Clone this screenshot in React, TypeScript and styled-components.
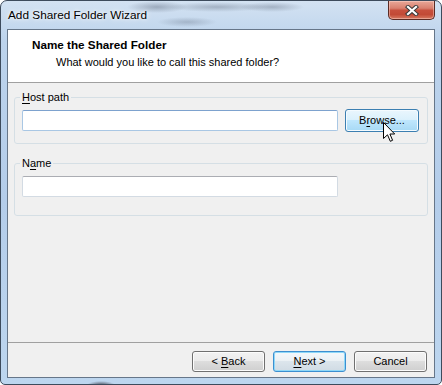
import React from 'react';
import styled, { createGlobalStyle, css } from 'styled-components';

const GlobalStyle = createGlobalStyle`
  html, body {
    margin: 0;
    padding: 0;
    background: #fff;
  }
  body {
    font-family: 'Liberation Sans', Arial, sans-serif;
    font-size: 11px;
    color: #000;
  }
`;

const CloseIcon = () => (
  <svg width="14" height="11" viewBox="0 0 14 11">
    <path d="M3 2 L11 9 M11 2 L3 9" stroke="#3b3b3b" strokeWidth="4.2" strokeLinecap="square" />
    <path d="M3 2 L11 9 M11 2 L3 9" stroke="#fff" strokeWidth="2.2" strokeLinecap="square" />
  </svg>
);

const Pointer = () => (
  <svg width="13" height="21" viewBox="0 0 13 21">
    <path
      d="M0.5 0.5 L0.5 16.5 L4.5 12.8 L7.3 19.3 L9.6 18.3 L6.9 12 L11.7 12 Z"
      fill="#fff"
      stroke="#000"
      strokeWidth="1"
      strokeLinejoin="miter"
    />
  </svg>
);

export default function App() {
  return (
    <>
      <GlobalStyle />
      <Window>
        <TitleBar>
          <Caption>Add Shared Folder Wizard</Caption>
          <CloseButton aria-label="Close">
            <CloseIcon />
          </CloseButton>
        </TitleBar>
        <Client>
          <Header>
            <HeaderTitle>Name the Shared Folder</HeaderTitle>
            <HeaderSub>What would you like to call this shared folder?</HeaderSub>
          </Header>
          <Body>
            <GroupBox $bottom={11}>
              <Legend>
                <U>H</U>ost path
              </Legend>
              <Row>
                <TextInput $active />
                <BrowseWrap>
                  <Button $variant="hover" $width={74} $height={23}>
                    <span>
                      B<U>r</U>owse...
                    </span>
                  </Button>
                  <Cursor>
                    <Pointer />
                  </Cursor>
                </BrowseWrap>
              </Row>
            </GroupBox>
            <GroupBox $bottom={17}>
              <Legend>
                N<U>a</U>me
              </Legend>
              <Row>
                <TextInput />
              </Row>
            </GroupBox>
          </Body>
          <Footer>
            <Button>
              <span>
                &lt; <U>B</U>ack
              </span>
            </Button>
            <Button $variant="default">
              <span>
                <U>N</U>ext &gt;
              </span>
            </Button>
            <Button>
              <span>Cancel</span>
            </Button>
          </Footer>
        </Client>
      </Window>
    </>
  );
}

const Window = styled.div`
  width: 442px;
  height: 385px;
  box-sizing: border-box;
  border: 1px solid #3d4b5c;
  border-radius: 7px 7px 5px 5px;
  padding: 0 6px 6px;
  display: flex;
  flex-direction: column;
  overflow: hidden;
  background:
    radial-gradient(ellipse 14px 4px at 100px 384px, rgba(40, 40, 50, 0.75), transparent),
    linear-gradient(to bottom, #d3e2f2 0, #bcd3ec 40px, #b4cdea 200px, #bdd6ef 100%);
`;

const TitleBar = styled.div`
  height: 28px;
  display: flex;
  align-items: flex-start;
  background:
    radial-gradient(ellipse 30px 6px at 150px 6px, rgba(60, 70, 90, 0.35), transparent),
    radial-gradient(ellipse 50px 5px at 210px 6px, rgba(60, 70, 90, 0.3), transparent),
    radial-gradient(ellipse 32px 5px at 265px 6px, rgba(60, 70, 90, 0.3), transparent),
    radial-gradient(ellipse 30px 5px at 180px 21px, rgba(60, 70, 90, 0.25), transparent);
`;

const Caption = styled.div`
  padding: 7px 0 0 1px;
  line-height: 15px;
  font-size: 11.8px;
  color: #000;
  text-shadow: 0 0 6px rgba(255, 255, 255, 0.95), 0 0 3px rgba(255, 255, 255, 0.9);
  white-space: nowrap;
`;

const CloseButton = styled.div`
  margin-left: auto;
  width: 47px;
  height: 19px;
  box-sizing: border-box;
  border: 1px solid #5a2b24;
  border-top: none;
  border-radius: 0 0 5px 5px;
  display: flex;
  align-items: center;
  justify-content: center;
  background: linear-gradient(
    to bottom,
    #e9a898 0%,
    #d9806f 40%,
    #c7503d 52%,
    #c24a36 75%,
    #d77a62 100%
  );
  box-shadow: inset 0 0 0 1px rgba(255, 220, 210, 0.45);
`;

const Client = styled.div`
  flex: 1;
  display: flex;
  flex-direction: column;
  border: 1px solid #667689;
  background: #f0f0f0;
`;

const Header = styled.div`
  height: 53px;
  box-sizing: border-box;
  background: #fff;
  border-bottom: 1px solid #a0a0a0;
  padding: 7px 0 0 24px;
`;

const HeaderTitle = styled.div`
  font-weight: bold;
  font-size: 11.7px;
  line-height: 15px;
`;

const HeaderSub = styled.div`
  margin: 3px 0 0 24px;
  line-height: 15px;
`;

const Body = styled.div`
  flex: 1;
  display: flex;
  flex-direction: column;
  gap: 12px;
  padding: 7px 6px 0;
`;

const GroupBox = styled.fieldset<{ $bottom: number }>`
  margin: 0;
  min-width: 0;
  border: 1px solid #d5dfe5;
  border-radius: 3px;
  padding: 4px 8px ${({ $bottom }) => $bottom}px 7px;
`;

const Legend = styled.legend`
  margin-left: -2px;
  padding: 0 2px;
  line-height: 15px;
`;

const Row = styled.div`
  display: flex;
  align-items: center;
  gap: 7px;
  height: 23px;
`;

const TextInput = styled.div<{ $active?: boolean }>`
  width: 316px;
  height: 21px;
  box-sizing: border-box;
  background: #fff;
  border: 1px solid #d3dbe3;
  border-top-color: #abadb3;
  border-radius: 2px;
  ${({ $active }) =>
    $active &&
    css`
      border-color: #a9c7e4;
      border-top-color: #7da2ce;
    `}
`;

const BrowseWrap = styled.div`
  position: relative;
`;

const Cursor = styled.div`
  position: absolute;
  left: 38px;
  top: 13px;
  line-height: 0;
`;

const U = styled.span`
  text-decoration: underline;
  text-underline-offset: 2px;
`;

const Button = styled.div<{ $variant?: 'normal' | 'default' | 'hover'; $width?: number; $height?: number }>`
  width: ${({ $width }) => $width ?? 73}px;
  height: ${({ $height }) => $height ?? 21}px;
  box-sizing: border-box;
  display: flex;
  align-items: center;
  justify-content: center;
  border: 1px solid #707070;
  border-radius: 3px;
  line-height: 15px;
  white-space: nowrap;
  background: linear-gradient(to bottom, #f2f2f2 0%, #ebebeb 50%, #dddddd 50%, #cfcfcf 100%);
  box-shadow: inset 0 0 0 1px #fcfcfc;
  ${({ $variant }) =>
    $variant === 'default' &&
    css`
      border-color: #3c8fd0;
      box-shadow: inset 0 0 0 1px #8fd8f8;
      background: linear-gradient(to bottom, #f4f8fb 0%, #eaf0f4 50%, #dce5ec 50%, #d0dbe4 100%);
    `}
  ${({ $variant }) =>
    $variant === 'hover' &&
    css`
      border-color: #3c7fb1;
      box-shadow: inset 0 0 0 1px #f4fbff;
      background: linear-gradient(to bottom, #eaf6fd 0%, #d9f0fc 50%, #bee6fd 50%, #a7d9f5 100%);
    `}
`;

const Footer = styled.div`
  height: 35px;
  box-sizing: border-box;
  border-top: 1px solid #a0a0a0;
  display: flex;
  align-items: flex-start;
  justify-content: flex-end;
  gap: 8px;
  padding: 8px 7px 0;
`;
